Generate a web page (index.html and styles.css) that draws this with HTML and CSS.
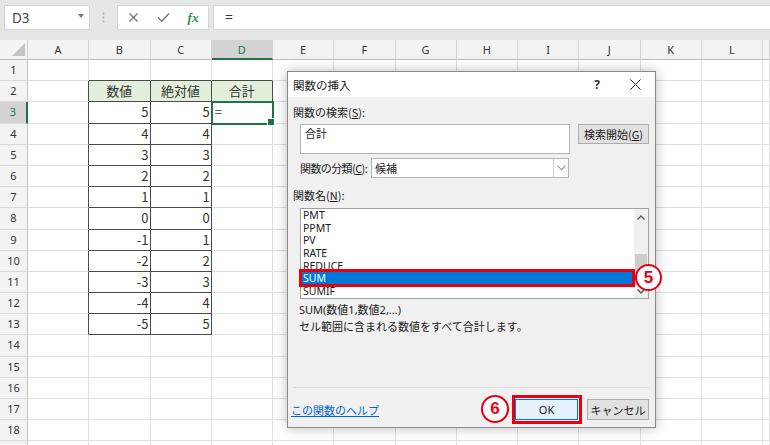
FILE: index.html
```html
<!DOCTYPE html>
<html lang="ja">
<head>
<meta charset="utf-8">
<link rel="stylesheet" href="styles.css">
</head>
<body>
<div class="fbar">
  <div class="namebox"><span>D3</span><span class="caret"></span></div>
  <div class="dots"><svg width="3" height="11" viewBox="0 0 3 11"><circle cx="1.5" cy="1.5" r="1" fill="#b4b4b4"/><circle cx="1.5" cy="5.5" r="1" fill="#b4b4b4"/><circle cx="1.5" cy="9.5" r="1" fill="#b4b4b4"/></svg></div>
  <div class="fbtns">
    <span class="fb"><svg width="11" height="11" viewBox="0 0 11 11"><path d="M1.5 1.5L9.5 9.5M9.5 1.5L1.5 9.5" stroke="#7a7a7a" stroke-width="1.4" fill="none"/></svg></span>
    <span class="fb"><svg width="13" height="11" viewBox="0 0 13 11"><path d="M1 5.5L4.8 9.2L12 1.5" stroke="#7a7a7a" stroke-width="1.6" fill="none"/></svg></span>
    <span class="fb fx">fx</span>
  </div>
  <div class="finput">=</div>
</div>

<div class="sheet">
  <div class="corner"><span class="tri"></span></div><div class="ch">A</div><div class="ch">B</div><div class="ch">C</div><div class="ch selh">D</div><div class="ch">E</div><div class="ch">F</div><div class="ch">G</div><div class="ch">H</div><div class="ch">I</div><div class="ch">J</div><div class="ch">K</div><div class="ch">L</div><div class="ch"></div>

  <div class="rh">1</div><div></div><div class="bb"></div><div class="bb"></div><div class="bb"></div><div></div><div></div><div></div><div></div><div></div><div></div><div></div><div></div><div></div>
  <div class="rh">2</div><div class="br"></div><div class="bd h2">数値</div><div class="bd h2">絶対値</div><div class="bd h2">合計</div><div></div><div></div><div></div><div></div><div></div><div></div><div></div><div></div><div></div>
  <div class="rh selr">3</div><div class="br"></div><div class="bd n">5</div><div class="bd n">5</div><div class="sel">=</div><div></div><div></div><div></div><div></div><div></div><div></div><div></div><div></div><div></div>
  <div class="rh">4</div><div class="br"></div><div class="bd n">4</div><div class="bd n">4</div><div></div><div></div><div></div><div></div><div></div><div></div><div></div><div></div><div></div><div></div>
  <div class="rh">5</div><div class="br"></div><div class="bd n">3</div><div class="bd n">3</div><div></div><div></div><div></div><div></div><div></div><div></div><div></div><div></div><div></div><div></div>
  <div class="rh">6</div><div class="br"></div><div class="bd n">2</div><div class="bd n">2</div><div></div><div></div><div></div><div></div><div></div><div></div><div></div><div></div><div></div><div></div>
  <div class="rh">7</div><div class="br"></div><div class="bd n">1</div><div class="bd n">1</div><div></div><div></div><div></div><div></div><div></div><div></div><div></div><div></div><div></div><div></div>
  <div class="rh">8</div><div class="br"></div><div class="bd n">0</div><div class="bd n">0</div><div></div><div></div><div></div><div></div><div></div><div></div><div></div><div></div><div></div><div></div>
  <div class="rh">9</div><div class="br"></div><div class="bd n">-1</div><div class="bd n">1</div><div></div><div></div><div></div><div></div><div></div><div></div><div></div><div></div><div></div><div></div>
  <div class="rh">10</div><div class="br"></div><div class="bd n">-2</div><div class="bd n">2</div><div></div><div></div><div></div><div></div><div></div><div></div><div></div><div></div><div></div><div></div>
  <div class="rh">11</div><div class="br"></div><div class="bd n">-3</div><div class="bd n">3</div><div></div><div></div><div></div><div></div><div></div><div></div><div></div><div></div><div></div><div></div>
  <div class="rh">12</div><div class="br"></div><div class="bd n">-4</div><div class="bd n">4</div><div></div><div></div><div></div><div></div><div></div><div></div><div></div><div></div><div></div><div></div>
  <div class="rh">13</div><div class="br"></div><div class="bd n">-5</div><div class="bd n">5</div><div></div><div></div><div></div><div></div><div></div><div></div><div></div><div></div><div></div><div></div>
  <div class="rh">14</div><div></div><div></div><div></div><div></div><div></div><div></div><div></div><div></div><div></div><div></div><div></div><div></div><div></div>
  <div class="rh">15</div><div></div><div></div><div></div><div></div><div></div><div></div><div></div><div></div><div></div><div></div><div></div><div></div><div></div>
  <div class="rh">16</div><div></div><div></div><div></div><div></div><div></div><div></div><div></div><div></div><div></div><div></div><div></div><div></div><div></div>
  <div class="rh">17</div><div></div><div></div><div></div><div></div><div></div><div></div><div></div><div></div><div></div><div></div><div></div><div></div><div></div>
  <div class="rh">18</div><div></div><div></div><div></div><div></div><div></div><div></div><div></div><div></div><div></div><div></div><div></div><div></div><div></div>
  <div class="rh"></div><div></div><div></div><div></div><div></div><div></div><div></div><div></div><div></div><div></div><div></div><div></div><div></div><div></div>
</div>

<div class="dialog">
  <div class="dtitle">
    <span class="dt-text">関数の挿入</span>
    <span class="dt-q">?</span>
    <span class="dt-x"><svg width="11" height="11" viewBox="0 0 11 11"><path d="M0.5 0.5L10.5 10.5M10.5 0.5L0.5 10.5" stroke="#222" stroke-width="1" fill="none"/></svg></span>
  </div>
  <div class="dbody">
    <div class="lbl first">関数の検索(<u>S</u>):</div>
    <div class="srow">
      <div class="search">合計</div>
      <div class="btn gobtn">検索開始(<u>G</u>)</div>
    </div>
    <div class="crow">
      <span class="clbl">関数の分類(<u>C</u>):</span>
      <div class="combo"><span class="cval">候補</span><span class="cdrop"><svg width="9" height="6" viewBox="0 0 9 6"><path d="M0.5 0.8L4.5 4.8L8.5 0.8" stroke="#666" stroke-width="1" fill="none"/></svg></span></div>
    </div>
    <div class="lbl second">関数名(<u>N</u>):</div>
    <div class="list">
      <div class="items">
        <div class="item">PMT</div>
        <div class="item">PPMT</div>
        <div class="item">PV</div>
        <div class="item">RATE</div>
        <div class="item">REDUCE</div>
        <div class="item on">SUM</div>
        <div class="item">SUMIF</div>
      </div>
      <div class="sb">
        <span class="sb-up"><svg width="8" height="5" viewBox="0 0 8 5"><path d="M0.5 4.5L4 1L7.5 4.5" stroke="#555" stroke-width="1.3" fill="none"/></svg></span>
        <span class="thumb"></span>
        <span class="sb-dn"><svg width="8" height="5" viewBox="0 0 8 5"><path d="M0.5 0.5L4 4L7.5 0.5" stroke="#555" stroke-width="1.3" fill="none"/></svg></span>
      </div>
    </div>
    <div class="desc">
      <div class="d1">SUM(数値1,数値2,...)</div>
      <div>セル範囲に含まれる数値をすべて合計します。</div>
    </div>
    <div class="sep"></div>
    <div class="brow">
      <span class="help">この関数のヘルプ</span>
      <div class="btn ok">OK</div>
      <div class="btn cancel">キャンセル</div>
    </div>
  </div>
</div>

<div class="redbox rb-sum"></div>
<div class="redbox rb-ok"></div>
<div class="circ c5">5</div>
<div class="circ c6">6</div>
</body>
</html>
```

FILE: styles.css
```css
* { box-sizing: border-box; margin: 0; padding: 0; }
html, body { width: 770px; height: 445px; overflow: hidden; }
body {
  font-family: "Noto Sans CJK JP", "Noto Sans", sans-serif;
  background: #e6e6e6;
  color: #333;
  position: relative;
}

/* formula bar */
.fbar {
  height: 40px;
  display: flex;
  align-items: flex-start;
  padding: 5px 0 0 4px;
  background: #e6e6e6;
}
.namebox {
  width: 86px;
  height: 25px;
  background: #fff;
  border: 1px solid #d4d4d4;
  display: flex;
  align-items: center;
  justify-content: space-between;
  padding: 0 5px 0 7px;
  font-family: "Noto Sans", sans-serif;
  font-size: 13.5px;
  color: #444;
}
.caret {
  width: 0; height: 0;
  border-left: 3.5px solid transparent;
  border-right: 3.5px solid transparent;
  border-top: 4px solid #777;
  margin-top: -4px;
}
.dots {
  width: 27px;
  height: 25px;
  display: flex;
  align-items: center;
  justify-content: center;
}
.fbtns {
  width: 92px;
  height: 25px;
  background: #fff;
  border: 1px solid #d4d4d4;
  display: flex;
  align-items: center;
}
.fb {
  width: 30px;
  display: flex;
  justify-content: center;
  align-items: center;
}
.fx {
  font-family: "Liberation Serif", serif;
  font-style: italic;
  font-weight: bold;
  font-size: 13px;
  color: #2e8b57;
}
.finput {
  flex: 1;
  height: 25px;
  margin-left: 4px;
  background: #fff;
  border: 1px solid #d4d4d4;
  border-right: none;
  padding-left: 11px;
  font-family: "Noto Sans", sans-serif;
  font-size: 14px;
  line-height: 22px;
  color: #333;
}

/* sheet */
.sheet {
  display: grid;
  grid-template-columns: 28px repeat(12, 61.25px) 7px;
  grid-template-rows: 20px repeat(19, 21.2px);
  background: #fff;
}
.sheet > div {
  border-right: 1px solid #e0e0e0;
  border-bottom: 1px solid #e0e0e0;
  font-size: 13px;
  line-height: 20px;
  padding: 0 3px;
  white-space: nowrap;
  overflow: hidden;
  color: #333;
}
.sheet > .corner {
  background: #f3f3f3;
  border-right: 1px solid #cfcfcf;
  border-bottom: 1px solid #bcbcbc;
  display: flex;
  align-items: flex-end;
  justify-content: flex-end;
  padding: 0 2px 3px 0;
}
.tri {
  width: 0; height: 0;
  border-left: 13px solid transparent;
  border-bottom: 13px solid #c4c4c4;
}
.sheet > .ch {
  background: #f3f3f3;
  border-right: 1px solid #d4d4d4;
  border-bottom: 1px solid #bcbcbc;
  text-align: center;
  font-family: "Noto Sans", sans-serif;
  font-size: 11px;
  line-height: 19px;
  color: #333;
}
.sheet > .selh {
  background: #d3d3d3;
  color: #217346;
  border-bottom: 2px solid #217346;
}
.sheet > .rh {
  background: #f3f3f3;
  border-right: 1px solid #c6c6c6;
  border-bottom: 1px solid #d9d9d9;
  text-align: center;
  font-family: "Noto Sans", sans-serif;
  font-size: 11px;
  line-height: 20px;
  padding: 0;
  color: #333;
}
.sheet > .selr {
  background: #d3d3d3;
  color: #217346;
  border-right: 2px solid #217346;
}
.sheet > .bb { border-bottom-color: #4a4a4a; }
.sheet > .br { border-right-color: #4a4a4a; }
.sheet > .bd { border-right-color: #4a4a4a; border-bottom-color: #4a4a4a; }
.sheet > .h2 { background: #e2efda; text-align: center; }
.sheet > .n { text-align: right; padding-right: 1px; }
.sheet > .sel {
  position: relative;
  overflow: visible;
  outline: 2px solid #217346;
  outline-offset: -1px;
  padding-left: 3px;
}
.sheet > .sel::after {
  content: "";
  position: absolute;
  right: -3px;
  bottom: -3px;
  width: 6px;
  height: 6px;
  background: #217346;
  border: 1px solid #fff;
}

/* dialog */
.dialog {
  position: absolute;
  left: 287px;
  top: 71px;
  width: 369px;
  height: 357px;
  background: #f0f0f0;
  border: 1px solid #8a8a8a;
  box-shadow: 0 0 12px rgba(0, 0, 0, 0.28);
  font-size: 11px;
  color: #1a1a1a;
  display: flex;
  flex-direction: column;
  white-space: nowrap;
}
.dtitle {
  height: 25px;
  background: #fff;
  display: flex;
  align-items: center;
  padding-left: 5px;
}
.dt-text { flex: 1; font-size: 11.5px; color: #222; }
.dt-q {
  width: 20px;
  text-align: center;
  font-family: "Noto Sans", sans-serif;
  font-size: 12px;
  font-weight: bold;
  color: #333;
}
.dt-x {
  width: 20px;
  margin: 0 10px 0 18px;
  display: flex;
  justify-content: center;
}
.dbody {
  padding: 0 6px 0 5px;
  display: flex;
  flex-direction: column;
}
.lbl { line-height: 16px; height: 16px; }
.lbl.first { margin-top: 7px; }
.lbl.second { margin-top: 9px; }
.srow {
  margin: 4px 0 0 7px;
  display: flex;
  align-items: flex-start;
  gap: 8px;
}
.search {
  width: 270px;
  height: 30px;
  background: #fff;
  border: 1px solid #b4b4b4;
  padding-left: 4px;
  line-height: 16px;
}
.btn {
  height: 20px;
  background: #e1e1e1;
  border: 1px solid #adadad;
  display: flex;
  align-items: center;
  justify-content: center;
  font-size: 11px;
}
.gobtn { width: 71px; }
.crow {
  margin: 4px 0 0 7px;
  display: flex;
  align-items: center;
  height: 20px;
}
.clbl { width: 71px; letter-spacing: -0.6px; }
.combo {
  width: 198px;
  height: 20px;
  background: #fff;
  border: 1px solid #b4b4b4;
  display: flex;
  align-items: center;
}
.cval { flex: 1; padding-left: 3px; }
.cdrop {
  width: 15px;
  height: 18px;
  border-left: 1px solid #d0d0d0;
  display: flex;
  align-items: center;
  justify-content: center;
}
.list {
  margin: 5px 0 0 7px;
  width: 349px;
  height: 91px;
  background: #fff;
  border: 1px solid #a0a0a0;
  display: flex;
  overflow: hidden;
}
.items { flex: 1; }
.item {
  height: 12.7px;
  line-height: 12.7px;
  font-family: "Noto Sans", sans-serif;
  font-size: 10.5px;
  padding-left: 2px;
  color: #1a1a1a;
  overflow: hidden;
}
.item.on { background: #0078d7; color: #fff; }
.sb {
  width: 14px;
  background: #f0f0f0;
  display: flex;
  flex-direction: column;
  align-items: center;
}
.sb-up { height: 17px; display: flex; align-items: center; justify-content: center; }
.thumb { width: 12px; height: 31px; margin-top: 28px; background: #cdcdcd; }
.sb-dn { flex: 1; display: flex; align-items: center; justify-content: center; }
.desc {
  margin: 3px 0 0 6px;
  line-height: 16px;
}
.desc .d1 { font-family: "Noto Sans", "Noto Sans CJK JP", sans-serif; font-size: 11px; }
.sep {
  margin-top: 53px;
  height: 1px;
  background: #dcdcdc;
}
.brow {
  margin-top: 11px;
  height: 21px;
  display: flex;
  align-items: center;
}
.help {
  margin-left: -2px;
  color: #0066cc;
  text-decoration: underline;
  font-size: 11px;
  flex: 1;
}
.ok {
  width: 63px;
  height: 21px;
  background: #e5f1fb;
  border: 1px solid #0078d7;
  font-family: "Noto Sans", sans-serif;
  font-size: 11px;
}
.cancel {
  width: 62px;
  height: 21px;
  margin-left: 9px;
}

/* annotations */
.redbox {
  position: absolute;
  border: 3px solid #e60012;
}
.rb-sum { left: 299px; top: 269px; width: 336px; height: 18px; }
.rb-ok { left: 512px; top: 395px; width: 70px; height: 29px; }
.circ {
  position: absolute;
  width: 27px;
  height: 27px;
  border-radius: 50%;
  background: #fff;
  border: 2px solid #e60012;
  color: #e60012;
  font-family: "Liberation Sans", sans-serif;
  font-weight: bold;
  font-size: 17px;
  line-height: 23px;
  text-align: center;
}
.c5 { left: 635px; top: 264px; }
.c6 { left: 481px; top: 395px; width: 28px; height: 28px; line-height: 24px; }
```
